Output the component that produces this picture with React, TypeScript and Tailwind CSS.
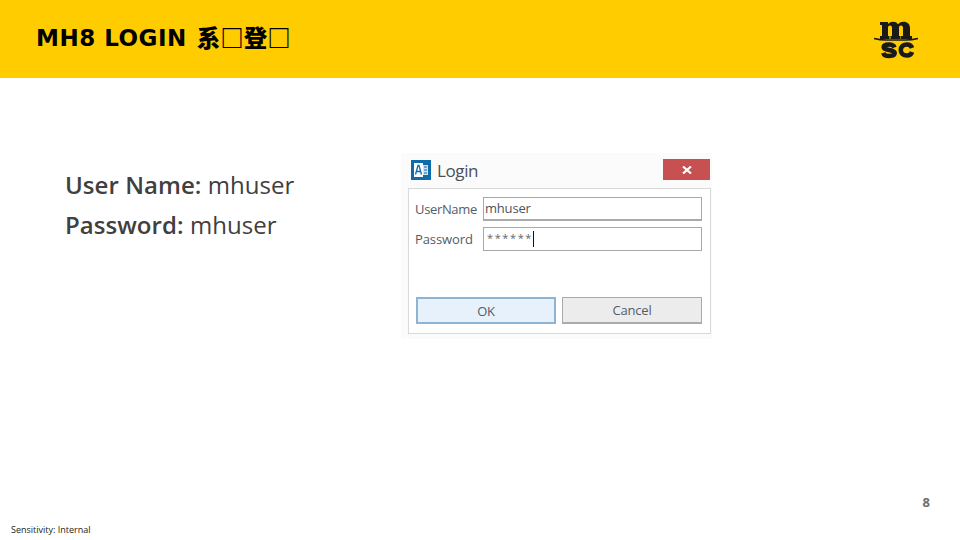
function MscLogo() {
  return (
    <svg width="46" height="42" viewBox="0 0 46 42" className="block">
      {/* m */}
      <path
        fill="#1a1a1a"
        d="M7 4H15V6C16.500 4.500 18 3.700 20 3.700C22.300 3.700 24 4.500 25 6.200C26.500 4.500 28.300 3.700 30.500 3.700C34.500 3.700 37 6 37 10V18H39V21H28V18H30V10C30 8.500 29.500 7.500 28 7.500C26.500 7.500 26 8.500 26 10V18H27.500V21H17.500V18H19V10C19 8.500 18.500 7.500 17 7.500C15.500 7.500 15 8.500 15 10V18H16.500V21H7V18H9V7H7Z"
      />
      {/* swoosh */}
      <path fill="none" stroke="#1a1a1a" strokeWidth="1.300" d="M1 20.500c4 1 8 1.500 12 1.500h20c4 0 8-.5 12-1.500" />
      {/* s */}
      <path
        fill="none"
        stroke="#1a1a1a"
        strokeWidth="4.600"
        d="M21.500 29.500c-.6-2-2.800-3-5.500-3-3 0-5.300 1-5.300 2.800 0 3.800 11 1.800 11 5.800 0 1.900-2.300 2.900-5.500 2.900-3 0-5.300-1.100-5.900-3.200"
      />
      {/* c */}
      <path
        fill="none"
        stroke="#1a1a1a"
        strokeWidth="4.600"
        d="M39 30c-.7-2.200-2.500-3.500-5-3.500-3.900 0-6.200 2.200-6.200 5.500s2.300 5.500 6.200 5.500c2.500 0 4.300-1.300 5-3.500"
      />
    </svg>
  );
}

function AppIcon() {
  return (
    <svg width="20" height="20" viewBox="0 0 20 20" className="block">
      <rect width="20" height="20" fill="#0f6cab" />
      <rect x="3" y="3" width="9" height="14" fill="#ffffff" />
      <rect x="12" y="5" width="5" height="10" fill="#cfe3f1" />
      <path d="M4.500 14.500 7 5.500h1l2.500 9M5.500 11.500h4" fill="none" stroke="#0f6cab" strokeWidth="1.300" />
      <path d="M13 7h3M13 10h3M13 13h3" stroke="#0f6cab" strokeWidth="1.200" />
    </svg>
  );
}

function LoginDialog() {
  return (
    <div className="w-[311px] h-[186px] bg-[#fbfbfb] pl-[7px] pr-px pt-[6px] pb-[5px] flex flex-col font-['Open_Sans',sans-serif] text-[#555c66]">
      <div className="h-[29px] flex items-start justify-between pl-[3px] pr-px">
        <div className="flex items-center gap-[6px] h-[22px]">
          <AppIcon />
          <span className="text-[17px] leading-none tracking-[-0.4px] text-[#4a4f57]">Login</span>
        </div>
        <div className="w-[47px] h-[21px] bg-[#c75050] flex items-center justify-center">
          <svg width="10" height="8" viewBox="0 0 10 8">
            <path d="M1 0.500 9 7.500M9 0.500 1 7.500" stroke="#ffffff" strokeWidth="2.200" />
          </svg>
        </div>
      </div>
      <div className="flex-1 bg-white border border-[#d9d9d9] pl-[6px] pr-[8px] pt-[8px] pb-[9px] flex flex-col">
        <div className="flex items-center h-[24px]">
          <span className="w-[68px] pt-[1px] text-[13px] tracking-[-0.35px] whitespace-nowrap">UserName</span>
          <div className="flex-1 h-[24px] border border-[#a9a9a9] border-b-2 pl-[1px] pt-[1px] flex items-center text-[13px] tracking-[-0.2px] text-[#50525c]">
            mhuser
          </div>
        </div>
        <div className="flex items-center h-[24px] mt-[6px]">
          <span className="w-[68px] pt-[1px] text-[13px] tracking-[-0.1px]">Password</span>
          <div className="flex-1 h-[24px] border border-[#a9a9a9] pl-[3px] flex items-center">
            <span className="text-[11px] leading-none tracking-[1.600px] text-[#666666] -mt-[3px]">******</span>
            <div className="w-px h-[16px] bg-[#111111]" />
          </div>
        </div>
        <div className="mt-auto flex gap-[6px] h-[27px] ml-px">
          <div className="w-[140px] pt-[2px] border-2 border-[#8fb4d2] bg-[#e6f1fb] flex items-center justify-center text-[13px] tracking-[-0.3px]">
            OK
          </div>
          <div className="flex-1 pt-[2px] border border-[#ababab] border-b-2 bg-[#ececec] flex items-center justify-center text-[13px] tracking-[-0.2px]">
            Cancel
          </div>
        </div>
      </div>
    </div>
  );
}

export default function App() {
  return (
    <div className="w-[960px] h-[540px] bg-white flex flex-col overflow-hidden">
      <header className="h-[78px] bg-[#ffcc00] flex items-center justify-between pl-[36px] pr-[41px]">
        <h1 className="flex items-center -mt-[2px] text-black leading-none font-bold whitespace-nowrap">
          <span className="text-[23px] tracking-[0.5px] font-['DejaVu_Sans',sans-serif]">MH8 LOGIN</span>
          <span className="ml-[10px] text-[23.500px] font-black font-['Noto_Sans_CJK_SC',sans-serif]">系□登□</span>
        </h1>
        <div className="-mt-[1px]">
          <MscLogo />
        </div>
      </header>

      <main className="flex-1 flex items-start">
        <div className="w-[401px] pl-[65px] pt-[87px] text-[24px] leading-[40px] tracking-[0.05px] text-[#404040] font-['Open_Sans',sans-serif]">
          <p>
            <b className="font-semibold">User Name:</b> mhuser
          </p>
          <p>
            <b className="font-semibold">Password:</b> mhuser
          </p>
        </div>
        <div className="pt-[75px]">
          <LoginDialog />
        </div>
      </main>

      <footer className="h-[50px] flex flex-col">
        <div className="h-[21px] pr-[30px] pt-[6px] text-right text-[13px] leading-none font-bold text-[#6f6f6f] font-['Open_Sans',sans-serif]">
          8
        </div>
        <div className="flex-1 flex items-end pl-[11px] pb-[5px] text-[9px] leading-[11px] text-[#222222] font-['Open_Sans',sans-serif]">
          Sensitivity: Internal
        </div>
      </footer>
    </div>
  );
}
